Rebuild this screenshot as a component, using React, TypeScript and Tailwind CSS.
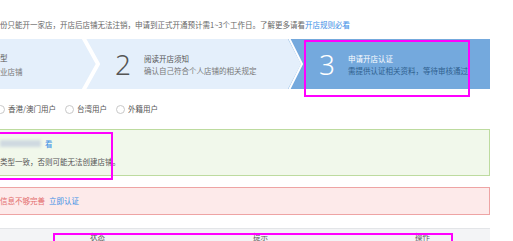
const CJK = "font-['Noto_Sans_CJK_SC','Noto_Sans',sans-serif]"

const RADIOS = ['香港/澳门用户', '台湾用户', '外籍用户']

function Step({ num, title, desc, active }: { num: string; title: string; desc: string; active?: boolean }) {
  return (
    <div className={`flex items-center h-full pl-[15px] gap-[13px] ${active ? 'bg-[#74a9dd] w-[186px]' : 'bg-[#e4effb] w-[186px]'}`}>
      <div className={`font-['Noto_Sans',sans-serif] font-light text-[28px] leading-none ${active ? 'text-white' : 'text-[#555]'}`}>{num}</div>
      <div className="flex flex-col gap-[3px] text-[7.5px] leading-[9px]">
        <div className={active ? 'text-white' : 'text-[#555]'}>{title}</div>
        <div className={active ? 'text-[#2f5f8e]' : 'text-[#777]'}>{desc}</div>
      </div>
    </div>
  )
}

export default function App() {
  return (
    <div className={`relative w-[513px] h-[241px] overflow-hidden bg-white ${CJK}`}>
      <div className="w-[490px] pt-[19px]">
        {/* notice */}
        <p className="text-[7.5px] leading-[11px] text-[#666] whitespace-nowrap">
          份只能开一家店，开店后店铺无法注销，申请到正式开通预计需1~3个工作日。了解更多请看<span className="text-[#3a8ee6]">开店规则必看</span>
        </p>

        {/* steps */}
        <div className="flex h-[50px] mt-[9px]">
          <div className="w-[82px] h-full bg-[#e4effb] flex flex-col justify-center gap-[5px] text-[7.5px] leading-[9px]">
            <div className="text-[#555]">型</div>
            <div className="text-[#777]">业店铺</div>
          </div>
          <svg width="18" height="50" viewBox="0 0 18 50" className="shrink-0">
            <rect width="18" height="50" fill="#e4effb" />
            <polyline points="1,-2 16,25 1,52" fill="none" stroke="#fff" strokeWidth="4" />
          </svg>
          <Step num="2" title="阅读开店须知" desc="确认自己符合个人店铺的相关规定" />
          <svg width="18" height="50" viewBox="0 0 18 50" className="shrink-0">
            <rect width="18" height="50" fill="#74a9dd" />
            <polygon points="0,0 2,0 15,25 2,50 0,50" fill="#e4effb" />
            <polyline points="3,-1 16,25 3,51" fill="none" stroke="#fff" strokeWidth="2" />
          </svg>
          <Step num="3" title="申请开店认证" desc="需提供认证相关资料，等待审核通过" active />
        </div>

        {/* user type radios */}
        <div className="flex items-center h-[12px] mt-[14px] -ml-[4px] text-[7.5px] text-[#555]">
          {RADIOS.map((r, i) => (
            <label key={i} className="flex items-center gap-[3px] mr-[9px]">
              <span className="w-[9px] h-[9px] rounded-full border border-[#c8c8c8] bg-white" />
              {r}
            </label>
          ))}
        </div>

        {/* green tip */}
        <div className="mt-[14px] h-[47px] bg-[#f1f8eb] border border-l-0 border-[#bddb9f] flex flex-col pt-[8px] gap-[7px] text-[7.5px] leading-[11px] text-[#555]">
          <div className="flex items-center">
            <span className="w-[41px] h-[7px] bg-[#cfd9e0] blur-[1.5px]" />
            <span className="text-[#3a8ee6] ml-[4px]">看</span>
          </div>
          <div>类型一致，否则可能无法创建店铺。</div>
        </div>

        {/* red tip */}
        <div className="mt-[11px] h-[28px] bg-[#fdeaea] border border-l-0 border-[#eea4a4] flex items-center text-[7.5px]">
          <span className="text-[#e36d6d]">信息不够完善</span>
          <span className="text-[#3a8ee6] ml-[4px]">立即认证</span>
        </div>

        {/* table head */}
        <div className="mt-[13px] h-[30px] bg-[#f3f4f6] border-t border-[#e3e5e8] flex pt-[3px] text-[7.5px] leading-[9px] text-[#555]">
          <span className="ml-[90px]">状态</span>
          <span className="ml-[148px]">提示</span>
          <span className="ml-[147px]">操作</span>
        </div>
      </div>

      {/* annotation frames */}
      <div className="absolute left-[304px] top-[40px] w-[166px] h-[57px] border-2 border-[#f0f]" />
      <div className="absolute left-[-4px] top-[132px] w-[117px] h-[48px] border-2 border-[#f0f]" />
      <div className="absolute left-[53px] top-[233px] w-[400px] h-[20px] border-2 border-[#f0f]" />
    </div>
  )
}
